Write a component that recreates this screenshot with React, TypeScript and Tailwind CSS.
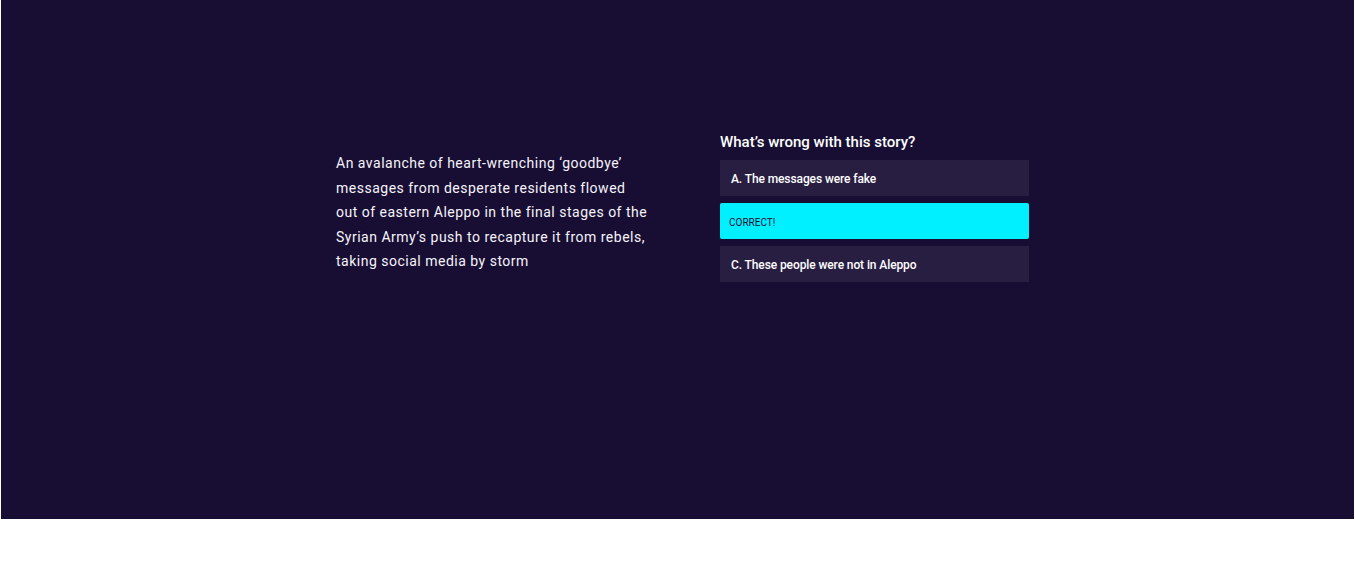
const answers = [
  { label: "A. The messages were fake", state: "idle" },
  { label: "CORRECT!", state: "correct" },
  { label: "C. These people were not in Aleppo", state: "idle" },
];

export default function App() {
  return (
    <div className="w-full bg-white font-['Roboto',sans-serif]">
      <section className="mx-px h-[519px] bg-[#180e33] pt-[133px] pl-[335px]">
        <div className="flex items-start">
          {/* Story */}
          <div className="w-[384px] shrink-0 pt-[18px]">
            <p className="w-[314px] text-[14px] leading-[24.5px] tracking-[0.5px] text-[#f6f4fa]">
              An avalanche of heart-wrenching ‘goodbye’ messages from desperate residents flowed
              out of eastern Aleppo in the final stages of the Syrian Army’s push to recapture it
              from rebels, taking social media by storm
            </p>
          </div>

          {/* Quiz */}
          <div className="w-[309px]">
            <h2 className="mb-[9px] text-[15px] font-medium leading-[18px] text-white">
              What’s wrong with this story?
            </h2>
            <div className="flex flex-col gap-[7px]">
              {answers.map((a) =>
                a.state === "correct" ? (
                  <button
                    key={a.label}
                    className="flex h-[36px] items-center rounded-[2px] bg-[#00f0ff] px-[9px] pt-[2px] text-left text-[10px] text-[#180e33]"
                  >
                    {a.label}
                  </button>
                ) : (
                  <button
                    key={a.label}
                    className="flex h-[36px] items-center bg-[#281e42] px-[11px] pt-[2px] text-left text-[12px] font-medium tracking-[-0.1px] text-white"
                  >
                    {a.label}
                  </button>
                )
              )}
            </div>
          </div>
        </div>
      </section>
      <div className="h-[57px]" />
    </div>
  );
}
